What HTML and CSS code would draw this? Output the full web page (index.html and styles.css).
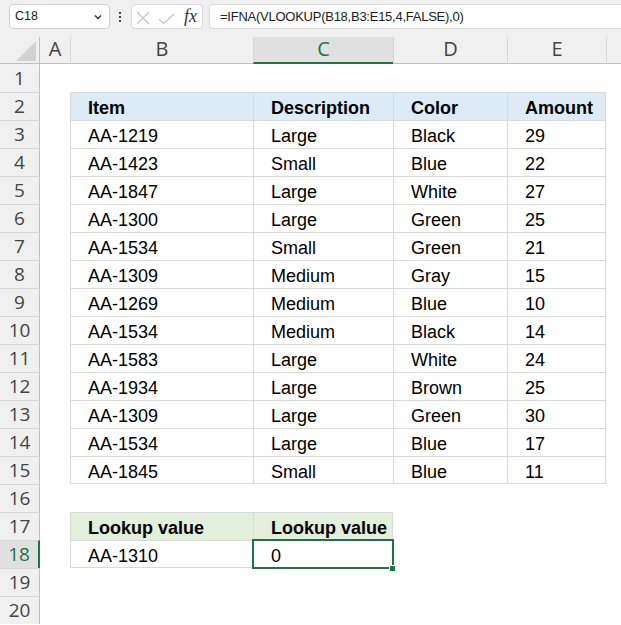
FILE: index.html
```html
<!DOCTYPE html>
<html>
<head>
<meta charset="utf-8">
<link rel="stylesheet" href="styles.css">
</head>
<body>
<div class="toolbar">
  <div class="namebox">
    <span class="namebox-text">C18</span>
    <svg class="chev" width="8" height="6" viewBox="0 0 8 6"><path d="M1 1.5 L4 4.5 L7 1.5" fill="none" stroke="#333" stroke-width="1.4"/></svg>
  </div>
  <div class="dots">
    <svg width="2" height="10" viewBox="0 0 2 10"><rect x="0" y="0" width="2" height="2" fill="#444"/><rect x="0" y="4" width="2" height="2" fill="#444"/><rect x="0" y="8" width="2" height="2" fill="#444"/></svg>
  </div>
  <div class="fnbox">
    <svg class="fnicons" width="46" height="23" viewBox="0 0 46 23"><path d="M5 7 L17 19 M17 7 L5 19" fill="none" stroke="#c2c2c2" stroke-width="1.1"/><path d="M27 14 L31.5 18.5 L42 9" fill="none" stroke="#c2c2c2" stroke-width="1.1"/></svg>
    <span class="fx">fx</span>
  </div>
  <div class="formula">=IFNA(VLOOKUP(B18,B3:E15,4,FALSE),0)</div>
</div>

<div class="sheet">
  <div class="row hdr">
    <div class="corner"><svg width="39" height="26" viewBox="0 0 39 26"><polygon points="16,24 36,4 36,24" fill="#d3d3d3"/></svg></div>
    <div class="ch first-col">A</div>
    <div class="ch">B</div>
    <div class="ch sel">C</div>
    <div class="ch">D</div>
    <div class="ch">E</div>
    <div class="ch"></div>
  </div>

  <div class="row"><div class="rh top">1</div></div>

  <div class="row"><div class="rh">2</div><div></div><div class="c th">Item</div><div class="c th">Description</div><div class="c th">Color</div><div class="c th end">Amount</div></div>
  <div class="row"><div class="rh">3</div><div></div><div class="c">AA-1219</div><div class="c">Large</div><div class="c">Black</div><div class="c end">29</div></div>
  <div class="row"><div class="rh">4</div><div></div><div class="c">AA-1423</div><div class="c">Small</div><div class="c">Blue</div><div class="c end">22</div></div>
  <div class="row"><div class="rh">5</div><div></div><div class="c">AA-1847</div><div class="c">Large</div><div class="c">White</div><div class="c end">27</div></div>
  <div class="row"><div class="rh">6</div><div></div><div class="c">AA-1300</div><div class="c">Large</div><div class="c">Green</div><div class="c end">25</div></div>
  <div class="row"><div class="rh">7</div><div></div><div class="c">AA-1534</div><div class="c">Small</div><div class="c">Green</div><div class="c end">21</div></div>
  <div class="row"><div class="rh">8</div><div></div><div class="c">AA-1309</div><div class="c">Medium</div><div class="c">Gray</div><div class="c end">15</div></div>
  <div class="row"><div class="rh">9</div><div></div><div class="c">AA-1269</div><div class="c">Medium</div><div class="c">Blue</div><div class="c end">10</div></div>
  <div class="row"><div class="rh">10</div><div></div><div class="c">AA-1534</div><div class="c">Medium</div><div class="c">Black</div><div class="c end">14</div></div>
  <div class="row"><div class="rh">11</div><div></div><div class="c">AA-1583</div><div class="c">Large</div><div class="c">White</div><div class="c end">24</div></div>
  <div class="row"><div class="rh">12</div><div></div><div class="c">AA-1934</div><div class="c">Large</div><div class="c">Brown</div><div class="c end">25</div></div>
  <div class="row"><div class="rh">13</div><div></div><div class="c">AA-1309</div><div class="c">Large</div><div class="c">Green</div><div class="c end">30</div></div>
  <div class="row"><div class="rh">14</div><div></div><div class="c">AA-1534</div><div class="c">Large</div><div class="c">Blue</div><div class="c end">17</div></div>
  <div class="row last"><div class="rh">15</div><div></div><div class="c">AA-1845</div><div class="c">Small</div><div class="c">Blue</div><div class="c end">11</div></div>

  <div class="row"><div class="rh">16</div></div>
  <div class="row"><div class="rh">17</div><div></div><div class="c tg">Lookup value</div><div class="c tg end">Lookup value</div></div>
  <div class="row last"><div class="rh sel">18</div><div></div><div class="c">AA-1310</div><div class="c end active">0</div></div>
  <div class="row"><div class="rh">19</div></div>
  <div class="row"><div class="rh">20</div></div>
</div>
</body>
</html>
```

FILE: styles.css
```css
html, body {
  margin: 0;
  padding: 0;
}
body {
  width: 621px;
  height: 625px;
  overflow: hidden;
  background: #ffffff;
  font-family: "Liberation Sans", Arial, sans-serif;
  color: #000;
}

/* ---------- formula bar ---------- */
.toolbar {
  display: flex;
  align-items: flex-start;
  height: 37px;
  box-sizing: border-box;
  padding: 4px 0 0 9px;
  background: #f0f0f0;
}
.namebox {
  width: 101px;
  height: 25px;
  box-sizing: border-box;
  border: 1px solid #d1d1d1;
  border-radius: 4px;
  background: #fff;
  display: flex;
  justify-content: space-between;
  align-items: flex-start;
  padding: 0 7px 0 5px;
}
.namebox-text {
  font-size: 12.5px;
  line-height: 21px;
  padding-top: 1px;
  color: #222;
}
.chev {
  margin-top: 9px;
}
.dots {
  width: 21px;
  box-sizing: border-box;
  padding: 8px 0 0 9px;
}
.dots svg, .corner svg, .fnicons {
  display: block;
}
.fnbox {
  width: 72px;
  height: 25px;
  box-sizing: border-box;
  border: 1px solid #d9d9d9;
  border-radius: 4px;
  background: #fff;
  display: flex;
  align-items: flex-start;
}
.fx {
  font-family: "Liberation Serif", "Times New Roman", serif;
  font-style: italic;
  font-size: 18px;
  line-height: 22px;
  color: #333;
  margin-left: 6px;
}
.formula {
  flex: 1;
  margin-left: 6px;
  height: 25px;
  box-sizing: border-box;
  border: 1px solid #d9d9d9;
  border-right: none;
  border-radius: 4px 0 0 4px;
  background: #fff;
  padding: 1px 0 0 10px;
  font-size: 13px;
  line-height: 21px;
  letter-spacing: -0.25px;
  color: #222;
  white-space: nowrap;
  overflow: hidden;
}

/* ---------- grid ---------- */
.row {
  display: grid;
  grid-template-columns: 40px 30px 183px 140px 114px 99px 1fr;
  height: 28px;
}
.row > div {
  box-sizing: border-box;
  min-width: 0;
}
.row.hdr {
  height: 27px;
}
.corner {
  background: #f0f0f0;
  border-right: 1px solid #bfbfbf;
  border-bottom: 1px solid #bfbfbf;
}
.ch {
  background: #f0f0f0;
  border-left: 1px solid #d6d6d6;
  border-bottom: 1px solid #bfbfbf;
  text-align: center;
  font-family: "Open Sans", "Noto Sans", sans-serif;
  font-size: 20px;
  line-height: 24px;
  color: #444;
}
.ch.first-col {
  border-left: none;
}
.ch.sel {
  background: #e0e0e0;
  color: #217346;
  border-bottom: 2px solid #217346;
}
.rh {
  background: #f0f0f0;
  border-right: 1px solid #bfbfbf;
  border-top: 1px solid #d6d6d6;
  text-align: center;
  font-family: "Open Sans", "Noto Sans", sans-serif;
  font-size: 19px;
  line-height: 25px;
  padding-top: 1px;
  color: #444;
}
.rh.top {
  border-top-color: transparent;
}
.rh.sel {
  background: #e0e0e0;
  color: #217346;
  border-right: 2px solid #217346;
}

/* ---------- table cells ---------- */
.c {
  border-top: 1px solid #d9d9d9;
  border-left: 1px solid #d9d9d9;
  padding: 4px 0 0 17px;
  font-size: 18px;
  line-height: 22px;
  white-space: nowrap;
  color: #000;
}
.c.end {
  border-right: 1px solid #d9d9d9;
}
.row.last .c {
  border-bottom: 1px solid #d9d9d9;
}
.th {
  background: #ddebf7;
  font-weight: bold;
}
.tg {
  background: #e2efda;
  font-weight: bold;
}
.c.active {
  position: relative;
}
.c.active::after {
  content: "";
  position: absolute;
  left: -2px;
  top: -2px;
  width: 142px;
  height: 30px;
  box-sizing: border-box;
  border: 2px solid #217346;
}
.c.active::before {
  content: "";
  position: absolute;
  left: 136px;
  top: 25px;
  width: 5px;
  height: 5px;
  background: #217346;
  box-shadow: 0 0 0 1px #fff;
  z-index: 2;
}
```
